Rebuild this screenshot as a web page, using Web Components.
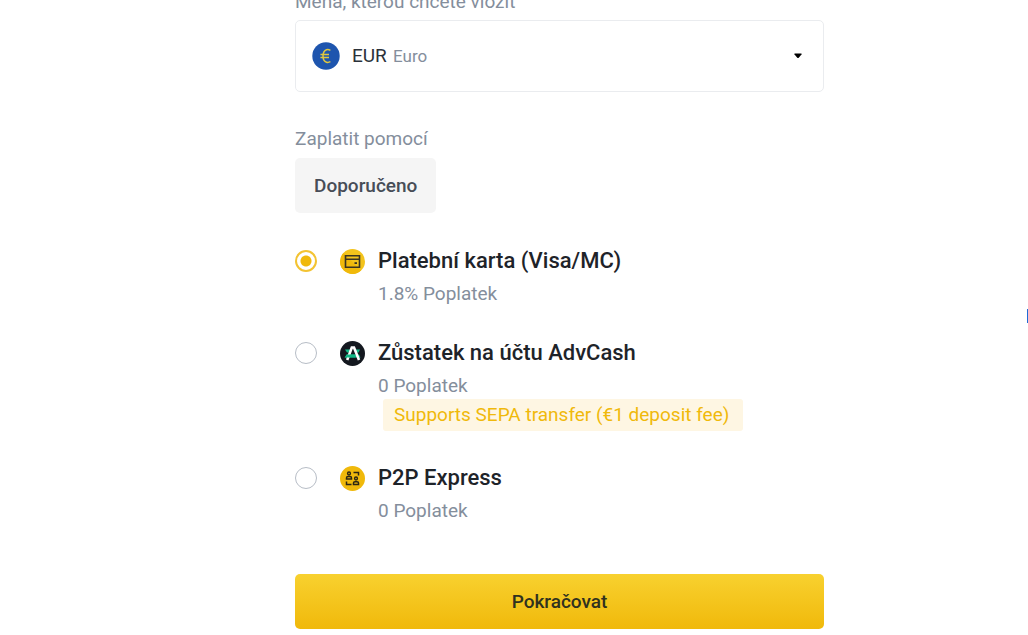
<!DOCTYPE html>
<html lang="cs">
<head>
<meta charset="utf-8">
<meta name="viewport" content="width=device-width, initial-scale=1">
<title>Vklad</title>
<style>
html { overflow: hidden; }
body { margin: 0; background: #fff; color: #1e2329; font-family: Roboto, "Noto Sans", sans-serif; font-size: 19px; line-height: 24px; }
</style>
</head>
<body>
<deposit-page>
  <currency-select></currency-select>
  <pay-group>
    <pay-option value="card" checked>
      <coin-icon slot="icon" kind="card"></coin-icon>
      <span slot="name">Platební karta (Visa/MC)</span>
      <span slot="fee">1.8% Poplatek</span>
    </pay-option>
    <pay-option value="advcash">
      <coin-icon slot="icon" kind="adv"></coin-icon>
      <span slot="name">Zůstatek na účtu AdvCash</span>
      <span slot="fee">0 Poplatek</span>
      <note-tag slot="note">Supports SEPA transfer (€1 deposit fee)</note-tag>
    </pay-option>
    <pay-option value="p2p">
      <coin-icon slot="icon" kind="p2p"></coin-icon>
      <span slot="name">P2P Express</span>
      <span slot="fee">0 Poplatek</span>
    </pay-option>
  </pay-group>
  <submit-button>Pokračovat</submit-button>
</deposit-page>
<edge-tab></edge-tab>
<script>
const define = (name, html, setup) => customElements.define(name, class extends HTMLElement {
  connectedCallback() {
    if (this.shadowRoot) return;
    const root = this.attachShadow({ mode: "open" });
    const t = document.createElement("template");
    t.innerHTML = "<style>*{box-sizing:border-box}</style>" + html;
    root.append(t.content.cloneNode(true));
    if (setup) setup(this, root);
  }
});

define("deposit-page", `
<style>
:host { display: block; padding-left: 91px; }
main { max-width: 529px; margin: -10px auto 0; }
</style>
<main><slot></slot></main>`);

define("currency-select", `
<style>
:host { display: block; }
label { display: block; color: #848e9c; margin-bottom: 6px; }
.box { display: grid; grid-template-columns: 17px 28px 53px 1fr auto; align-items: center; height: 72px; }
.box > * { grid-row: 1; }
select { grid-column: 1 / -1; width: 100%; height: 100%; appearance: none; border: 1px solid #eaecef; border-radius: 5px; background: #fff; color: #2b3139; font: inherit; padding: 0 56px; }
svg, .name { pointer-events: none; }
.euro { grid-column: 2; width: 28px; height: 28px; }
.name { grid-column: 4; color: #848e9c; font-size: 17px; }
.arrow { grid-column: 5; width: 8px; height: 6px; margin-right: 22px; }
</style>
<label for="c">Měna, kterou chcete vložit</label>
<div class="box">
  <select id="c"><option>EUR</option></select>
  <svg class="euro" viewBox="0 0 28 28" aria-hidden="true"><circle cx="14" cy="14" r="13.7" fill="#1e55ae"/><path d="M18.400 8.400C17 7.600 15.700 7.400 14.500 7.800C11.700 8.800 11 11.300 11 14S11.700 19.300 14.500 20.200C15.700 20.600 17 20.400 18.400 19.700M8.400 12.600H17M8.400 15.500H17" fill="none" stroke="#e0c840" stroke-width="1.500"/></svg>
  <span class="name">Euro</span>
  <svg class="arrow" viewBox="0 0 8 6" aria-hidden="true"><path d="M.5.5H7.5V1.5L4.5 5H3.5L.5 1.5Z" fill="#000"/></svg>
</div>`);

define("pay-group", `
<style>
:host { display: block; margin-top: 35px; }
h2 { margin: 0 0 7px; font: inherit; color: #848e9c; }
button { display: block; height: 55px; padding: 0 19px; border: 0; border-radius: 5px; background: #f5f5f5; color: #474d57; font: inherit; font-weight: 500; }
form { display: flex; flex-direction: column; gap: 34px; margin-top: 35px; }
</style>
<h2>Zaplatit pomocí</h2>
<button type="button">Doporučeno</button>
<form><slot></slot></form>`);

define("pay-option", `
<style>
:host { display: block; }
label { display: grid; grid-template-columns: 45px 38px 1fr; align-items: center; }
input { appearance: none; width: 22px; height: 22px; margin: 0; border: 1px solid #b7bdc6; border-radius: 50%; background: #fff; }
input:checked { border: 2px solid #f3c332; background: radial-gradient(circle, #f0b90b 5px, #fff 6px); }
.name { font-size: 22px; line-height: 26px; font-weight: 500; }
.fee, .note { grid-column: 3; }
.fee { color: #848e9c; margin-top: 8px; }
</style>
<label>
  <input type="radio" name="pay">
  <slot name="icon"></slot>
  <span class="name"><slot name="name"></slot></span>
  <span class="fee"><slot name="fee"></slot></span>
  <span class="note"><slot name="note"></slot></span>
</label>`, (host, root) => {
  const input = root.querySelector("input");
  input.value = host.getAttribute("value");
  input.checked = host.hasAttribute("checked");
  input.addEventListener("change", () => {
    for (const other of host.parentElement.querySelectorAll("pay-option"))
      if (other !== host) other.shadowRoot.querySelector("input").checked = false;
  });
});

define("note-tag", `
<style>
:host { display: block; width: fit-content; margin: 1px 0 0 5px; padding: 4px 14px 4px 11px; border-radius: 3px; background: #fef6e3; color: #f0b90b; }
</style><slot></slot>`);

const icons = {
  card: `<circle cx="12.5" cy="12.5" r="12.5" fill="#f3c31c"/><path d="M0 12.5A12.5 12.5 0 0 1 3.500 4L21 21.500A12.500 12.500 0 0 1 0 12.500Z" fill="#f0b90b"/><path d="M5.500 6.800H19.500V18.200H5.500ZM5.500 10.300H19.500" fill="none" stroke="#3a3422" stroke-width="1.600"/><path d="M14.500 13.200H17V15H14.500Z" fill="#3a3422"/>`,
  adv: `<circle cx="12.5" cy="12.5" r="12.5" fill="#14181f"/><path d="M5 8.500H11L10 11.500H7ZM15 8.500H20L18.500 11.500H16ZM4.500 16.500L7 13.500H19L20.500 16.500Z" fill="#12b886"/><path d="M7.200 19L11.800 6.500H14L19 19" fill="none" stroke="#fff" stroke-width="2.600"/><path d="M6.500 13.500H15L15.500 16.500H5Z" fill="#12b886"/>`,
  p2p: `<circle cx="12.5" cy="12.5" r="12.5" fill="#f0b90b"/><g fill="none" stroke="#2c2614" stroke-width="1.500"><circle cx="9" cy="7.500" r="1.400"/><path d="M6.500 13V12Q6.500 10.500 8 10.500H10Q11.500 10.500 11.500 12V13ZM6.500 15.500V18.500H11.500M13.500 6.500H18.500V9.500"/><circle cx="16" cy="12.500" r="1.400"/><path d="M13.500 18.500V17Q13.500 15.700 15 15.700H17Q18.500 15.700 18.500 17V18.500Z"/></g>`
};
define("coin-icon", `
<style>:host { display: block; } svg { display: block; width: 25px; height: 25px; }</style>
<svg viewBox="0 0 25 25" aria-hidden="true"></svg>`, (host, root) => {
  root.querySelector("svg").innerHTML = icons[host.getAttribute("kind")];
});

define("submit-button", `
<style>
:host { display: block; margin-top: 51px; }
button { display: block; width: 100%; height: 55px; border: 0; border-radius: 5px; background: linear-gradient(#f8d12f, #f0b90b); color: #30311f; font: inherit; font-weight: 500; }
</style>
<button type="button"><slot></slot></button>`);

define("edge-tab", `
<style>:host { position: absolute; top: 309px; right: 0; width: 1px; height: 14px; background: #1f6bd6; }</style>`);
</script>
</body>
</html>
